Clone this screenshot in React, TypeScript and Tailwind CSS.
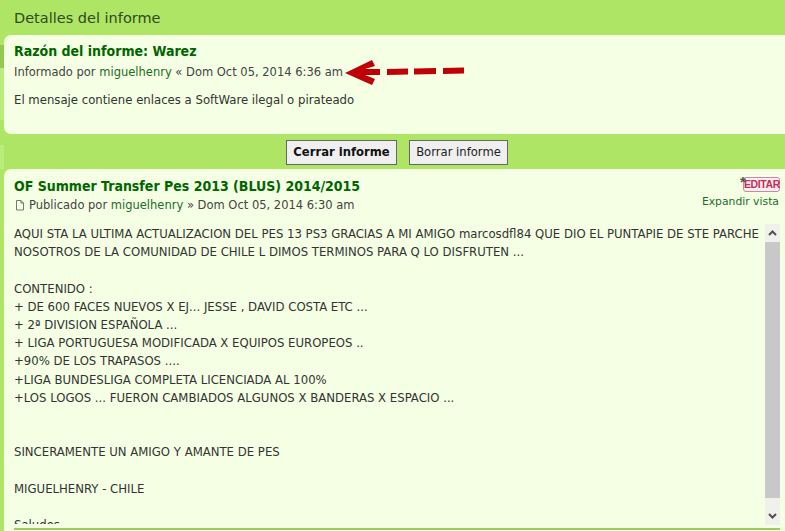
const bodyLines = [
  'AQUI STA LA ULTIMA ACTUALIZACION DEL PES 13 PS3 GRACIAS A MI AMIGO marcosdfl84 QUE DIO EL PUNTAPIE DE STE PARCHE',
  'NOSOTROS DE LA COMUNIDAD DE CHILE L DIMOS TERMINOS PARA Q LO DISFRUTEN ...',
  '',
  'CONTENIDO :',
  '+ DE 600 FACES NUEVOS X EJ... JESSE , DAVID COSTA ETC ...',
  '+ 2ª DIVISION ESPAÑOLA ...',
  '+ LIGA PORTUGUESA MODIFICADA X EQUIPOS EUROPEOS ..',
  '+90% DE LOS TRAPASOS ....',
  '+LIGA BUNDESLIGA COMPLETA LICENCIADA AL 100%',
  '+LOS LOGOS ... FUERON CAMBIADOS ALGUNOS X BANDERAS X ESPACIO ...',
  '',
  '',
  'SINCERAMENTE UN AMIGO Y AMANTE DE PES',
  '',
  'MIGUELHENRY - CHILE',
  '',
  'Saludos',
];

export default function App() {
  return (
    <div className="relative w-[785px] h-[531px] overflow-hidden bg-[#aee564] text-[#333] font-['DejaVu_Sans',sans-serif]">
      {/* page behind the panel shows through on the left edge */}
      <div className="absolute top-[45px] left-0 h-[23px] w-[4px] bg-[#93c94f]" />
      <div className="absolute top-[68px] left-0 h-[52px] w-[4px] bg-[#b9ee7a]" />
      <div className="absolute top-[145px] left-0 h-[24px] w-[4px] bg-[#b9ee7a]" />

      <h2 className="h-[35px] pl-[14px] pt-[9px] text-[14.5px] leading-[18px] text-[#2f4a22]">Detalles del informe</h2>

      <div className="relative ml-[4px] h-[99px] rounded-l-[7px] bg-[#f4ffe3] pl-[10px] pt-[6px]">
        <h3 className="font-['DejaVu_Sans_Condensed',sans-serif] [font-stretch:condensed] text-[14px] leading-[20px] font-bold text-[#006400]">Razón del informe: Warez</h3>
        <p className="mt-[3px] flex items-center text-[11.5px] leading-[16px] text-[#444]">
          <span>Informado por <a className="text-[#1f6b2a]">miguelhenry</a> « Dom Oct 05, 2014 6:36 am</span>
          <svg width="120" height="26" viewBox="0 0 120 26" className="ml-[2px] -my-[5px] shrink-0">
            <path d="M0 14 L27 1 L30 7 L20 10 L35 10 L35 16 L20 16 L30 20 L27 26 Z" fill="#c00008" />
            <path d="M42 10 L63 9.5 L63 15.5 L42 16 Z M69 9.5 L91 9 L91 15 L69 15.5 Z M98 9 L119 8.5 L119 14.5 L98 15 Z" fill="#c00008" />
          </svg>
        </p>
        <p className="mt-[12px] font-['DejaVu_Sans_Condensed',sans-serif] [font-stretch:condensed] text-[13px] leading-[16px] text-[#333]">
          El mensaje contiene enlaces a SoftWare ilegal o pirateado
        </p>
      </div>

      <div className="flex h-[35px] items-center justify-center gap-[12px] pl-[9px] pt-[2px]">
        <button className="h-[25px] w-[111px] border border-[#666] bg-[#efefef] text-[11.6px] font-bold text-[#111]">Cerrar informe</button>
        <button className="h-[25px] w-[99px] border border-[#666] bg-[#efefef] text-[11.6px] text-[#222]">Borrar informe</button>
      </div>

      <div className="relative ml-[4px] h-[362px] rounded-tl-[7px] bg-[#f4ffe3] pl-[10px] pr-[5px]">
        <div className="flex h-[54px] justify-between pt-[7px]">
          <div>
            <h3 className="font-['DejaVu_Sans_Condensed',sans-serif] [font-stretch:condensed] text-[14px] leading-[20px] font-bold text-[#006400]">OF Summer Transfer Pes 2013 (BLUS) 2014/2015</h3>
            <p className="mt-[1px] flex items-center text-[11.5px] leading-[16px] text-[#444]">
              <svg width="10" height="11" viewBox="0 0 10 11" className="mr-[4px] ml-[1px] shrink-0" fill="none" stroke="#777" strokeWidth="1">
                <path d="M1.5 0.5 H6 L8.5 3 V10 H1.5 Z M6 0.5 V3 H8.5" />
              </svg>
              <span>Publicado por <a className="text-[#1f6b2a]">miguelhenry</a> » Dom Oct 05, 2014 6:30 am</span>
            </p>
          </div>
          <div className="flex flex-col items-end pt-[1px]">
            <div className="relative h-[15px] w-[37px] rounded-[3px] border border-[#c98aa0] bg-[#fbeef0] text-center font-['Liberation_Sans',sans-serif] text-[10.5px] leading-[13px] font-bold tracking-[-0.4px] text-[#c2305a]">
              EDITAR
              <span className="absolute -top-[3px] -left-[4px] text-[15px] leading-[13px] font-bold text-[#555]">*</span>
            </div>
            <a className="mt-[3px] mr-[1px] text-[10.8px] leading-[13px] whitespace-nowrap text-[#1f6b2a]">Expandir vista</a>
          </div>
        </div>

        <div className="flex h-[307px] border-b-2 border-[#9ccc5a]">
          <div className="mb-[4px] min-w-0 flex-1 overflow-hidden pt-[2px] whitespace-pre font-['DejaVu_Sans_Condensed',sans-serif] [font-stretch:condensed] text-[13px] leading-[18px] text-[#333]">
            {bodyLines.map((line, i) => (
              <div key={i} className="h-[18.2px]">{line}</div>
            ))}
          </div>
          <div className="mt-[1px] mb-[3px] flex w-[15px] shrink-0 flex-col bg-[#f1f1ec]">
            <div className="flex h-[18px] items-center justify-center">
              <svg width="9" height="6" viewBox="0 0 9 6" fill="none" stroke="#505050" strokeWidth="2"><path d="M1 5 L4.5 1.5 L8 5" /></svg>
            </div>
            <div className="flex-1 bg-[#c8c8c8]" />
            <div className="flex h-[27px] items-end justify-center pb-[6px]">
              <svg width="9" height="6" viewBox="0 0 9 6" fill="none" stroke="#505050" strokeWidth="2"><path d="M1 1 L4.5 4.5 L8 1" /></svg>
            </div>
          </div>
        </div>
      </div>
    </div>
  );
}
